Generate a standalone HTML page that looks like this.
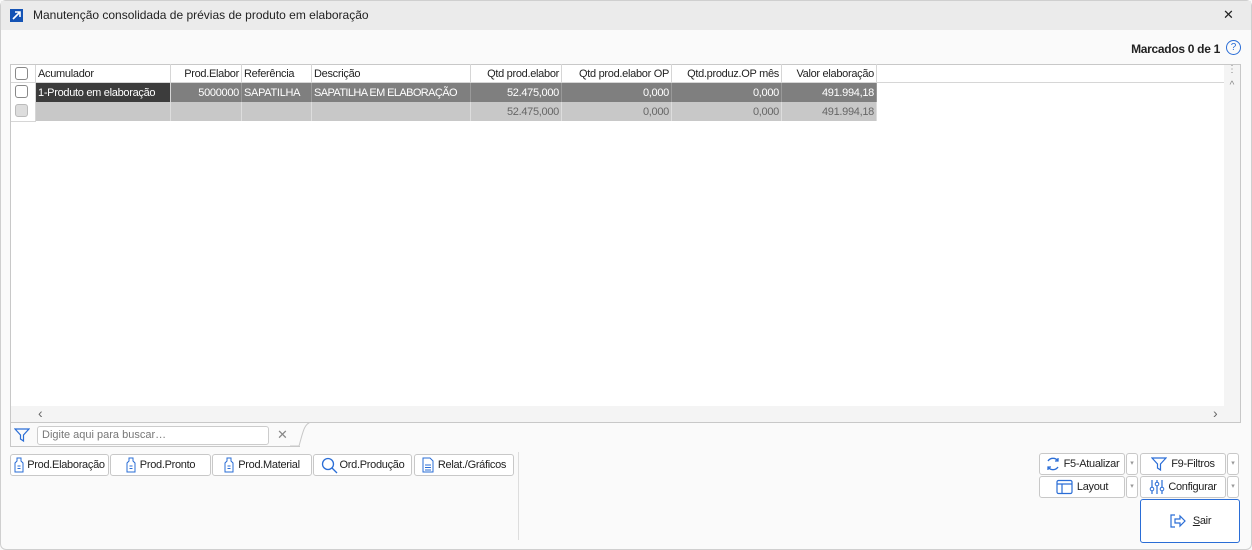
<!DOCTYPE html>
<html><head><meta charset="utf-8"><style>
*{box-sizing:border-box;margin:0;padding:0}
body{width:1252px;height:550px;background:#fafafa;font-family:"Liberation Sans",sans-serif;font-size:11px;color:#222;position:relative;overflow:hidden}
.a{position:absolute}
.win{left:0;top:0;width:1252px;height:550px;border:1px solid #cfcfcf;border-radius:6px}
.title{left:1px;top:1px;width:1250px;height:29px;background:#ebebeb}
.grid{left:10px;top:64px;width:1231px;height:359px;border:1px solid #c8c8c8;background:#fff}
.c{position:absolute;height:19px;line-height:20px;padding:0 2px;white-space:nowrap;overflow:hidden;border-right:1px solid #d6d6d6;letter-spacing:-0.3px}
.r{text-align:right}
.cb{position:absolute;width:13px;height:13px;border:1px solid #888;border-radius:3px;background:#fff}
.btn{position:absolute;height:22px;border:1px solid #c8c8c8;border-radius:3px;background:#fff;display:flex;align-items:center;justify-content:center;gap:4px;font-size:11px;white-space:nowrap;letter-spacing:-0.3px}
.dd{position:absolute;width:12px;height:22px;border:1px solid #c8c8c8;border-radius:3px;background:#fff;color:#999;font-size:7px;text-align:center;line-height:20px}
</style></head><body>
<div class="a win"></div>
<div class="a title"></div>
<div class="a" style="left:10px;top:9px;width:13px;height:13px;background:#1453b5"><svg width="13" height="13"><path d="M3 10L10 3M5 3h5v5" stroke="#fff" stroke-width="1.6" fill="none"/></svg></div>
<div class="a" style="left:33px;top:8px;font-size:12px">Manutenção consolidada de prévias de produto em elaboração</div>
<div class="a" style="left:1223px;top:7px;font-size:13px">✕</div>
<div class="a" style="right:32px;top:42px;font-weight:bold;font-size:12px;letter-spacing:-0.3px">Marcados 0 de 1</div>
<div class="a" style="left:1226px;top:40px;width:15px;height:15px;border:1.3px solid #2a6dd6;border-radius:50%;color:#2a6dd6;font-size:10px;text-align:center;line-height:13px">?</div>

<div class="a grid">
 <div class="a" style="left:0;top:0;width:1213px;height:18px;border-bottom:1px solid #d6d6d6"></div>
 <div class="cb" style="left:4px;top:2px"></div>
 <div class="c" style="left:0;top:0;width:25px"></div>
 <div class="c" style="left:25px;top:-1px;width:135px">Acumulador</div>
 <div class="c r" style="left:160px;top:-1px;width:71px">Prod.Elabor</div>
 <div class="c" style="left:231px;top:-1px;width:70px">Referência</div>
 <div class="c" style="left:301px;top:-1px;width:159px">Descrição</div>
 <div class="c r" style="left:460px;top:-1px;width:91px">Qtd prod.elabor</div>
 <div class="c r" style="left:551px;top:-1px;width:110px">Qtd prod.elabor OP</div>
 <div class="c r" style="left:661px;top:-1px;width:110px">Qtd.produz.OP mês</div>
 <div class="c r" style="left:771px;top:-1px;width:95px">Valor elaboração</div>
 <div class="cb" style="left:4px;top:20px"></div>
 <div class="c" style="left:25px;top:18px;width:135px;background:#3c3c3c;color:#fff">1-Produto em elaboração</div>
 <div style="position:absolute;left:160px;top:18px;width:706px;height:19px;background:#7f7f7f"></div>
 <div class="c r" style="left:160px;top:18px;width:71px;color:#fff;border-color:#999">5000000</div>
 <div class="c" style="left:231px;top:18px;width:70px;color:#fff;border-color:#999">SAPATILHA</div>
 <div class="c" style="left:301px;top:18px;width:159px;color:#fff;border-color:#999;letter-spacing:-0.6px">SAPATILHA EM ELABORAÇÃO</div>
 <div class="c r" style="left:460px;top:18px;width:91px;color:#fff;border-color:#999">52.475,000</div>
 <div class="c r" style="left:551px;top:18px;width:110px;color:#fff;border-color:#999">0,000</div>
 <div class="c r" style="left:661px;top:18px;width:110px;color:#fff;border-color:#999">0,000</div>
 <div class="c r" style="left:771px;top:18px;width:95px;color:#fff;border-color:#999">491.994,18</div>
 <div class="cb" style="left:4px;top:39px;background:#ddd;border-color:#bbb"></div>
 <div style="position:absolute;left:25px;top:37px;width:841px;height:19px;background:#c8c8c8"></div>
 <div class="c" style="left:25px;top:37px;width:135px;border-color:#ddd"></div>
 <div class="c" style="left:160px;top:37px;width:71px;border-color:#ddd"></div>
 <div class="c" style="left:231px;top:37px;width:70px;border-color:#ddd"></div>
 <div class="c" style="left:301px;top:37px;width:159px;border-color:#ddd"></div>
 <div class="c r" style="left:460px;top:37px;width:91px;color:#666;border-color:#ddd">52.475,000</div>
 <div class="c r" style="left:551px;top:37px;width:110px;color:#666;border-color:#ddd">0,000</div>
 <div class="c r" style="left:661px;top:37px;width:110px;color:#666;border-color:#ddd">0,000</div>
 <div class="c r" style="left:771px;top:37px;width:95px;color:#666;border-color:#ddd">491.994,18</div>
 <div style="position:absolute;left:0;top:56px;width:25px;height:1px;background:#d6d6d6"></div>
 <div style="position:absolute;left:24px;top:0;width:1px;height:57px;background:#d6d6d6"></div>
 <div style="position:absolute;left:1213px;top:0;width:16px;height:341px;background:#f4f4f4;color:#888;text-align:center;font-size:10px;line-height:1">⋮<br><span style="display:block;margin-top:6px">^</span></div>
 <div style="position:absolute;left:0;top:341px;width:1229px;height:16px;background:#f4f4f4;color:#666;font-size:14px;line-height:15px"><span style="margin-left:27px">‹</span><span style="position:absolute;left:1202px">›</span></div>
</div>

<div class="a" style="left:10px;top:422px;width:290px;height:25px;border:1px solid #c8c8c8;border-top:none;border-right:none"></div>
<svg class="a" style="left:290px;top:422px" width="22" height="26"><path d="M21 0C14 2 13 10 9 24H0" stroke="#c8c8c8" fill="none"/></svg>
<svg class="a" style="left:14px;top:427px" width="16" height="16"><path d="M1 2h14l-5.5 6v6l-3-2V8z" stroke="#2a6dd6" stroke-width="1.2" fill="none"/></svg>
<div class="a" style="left:37px;top:426px;width:232px;height:19px;border:1px solid #ccc;border-radius:3px;background:#fff;color:#777;padding-left:4px;line-height:17px">Digite aqui para buscar…</div>
<div class="a" style="left:277px;top:427px;color:#888;font-size:13px">✕</div>

<div class="btn" style="left:10px;top:454px;width:99px;gap:3px"><svg width="10" height="16" style="flex:none"><path d="M3 1h4v3l2 2v9H1V6l2-2z M3.5 9h3M3.5 11.5h3" stroke="#2a6dd6" fill="none"/></svg>Prod.Elaboração</div>
<div class="btn" style="left:110px;top:454px;width:101px"><svg width="10" height="16" style="flex:none"><path d="M3 1h4v3l2 2v9H1V6l2-2z M3.5 9h3M3.5 11.5h3" stroke="#2a6dd6" fill="none"/></svg>Prod.Pronto</div>
<div class="btn" style="left:212px;top:454px;width:100px"><svg width="10" height="16" style="flex:none"><path d="M3 1h4v3l2 2v9H1V6l2-2z M3.5 9h3M3.5 11.5h3" stroke="#2a6dd6" fill="none"/></svg>Prod.Material</div>
<div class="btn" style="left:313px;top:454px;width:99px;gap:2px"><svg width="17" height="17" style="flex:none"><circle cx="7" cy="7" r="5.5" stroke="#2a6dd6" stroke-width="1.3" fill="none"/><path d="M11 11l5 5" stroke="#2a6dd6" stroke-width="1.3"/></svg>Ord.Produção</div>
<div class="btn" style="left:414px;top:454px;width:100px"><svg width="12" height="16" style="flex:none"><path d="M1 1h7l3 3v11H1z M3 8h6M3 10.5h6M3 13h6" stroke="#2a6dd6" fill="none"/></svg>Relat./Gráficos</div>
<div class="a" style="left:518px;top:452px;width:1px;height:88px;background:#ddd"></div>

<div class="btn" style="left:1039px;top:453px;width:86px;gap:3px"><svg width="16" height="16" style="flex:none"><path d="M13 5A6 6 0 0 0 3 5M3 11a6 6 0 0 0 10 0M13 2v3h-3M3 14v-3h3" stroke="#2a6dd6" stroke-width="1.3" fill="none"/></svg>F5-Atualizar</div>
<div class="dd" style="left:1126px;top:453px">▾</div>
<div class="btn" style="left:1140px;top:453px;width:86px"><svg width="16" height="16" style="flex:none"><path d="M1 2h14l-5.5 6v6l-3-2V8z" stroke="#2a6dd6" stroke-width="1.2" fill="none"/></svg>F9-Filtros</div>
<div class="dd" style="left:1227px;top:453px">▾</div>
<div class="btn" style="left:1039px;top:476px;width:86px"><svg width="17" height="16" style="flex:none"><rect x="1" y="1.5" width="15" height="13" rx="1.5" stroke="#2a6dd6" stroke-width="1.2" fill="none"/><path d="M1 5h15M6 5v9.5" stroke="#2a6dd6" stroke-width="1.2"/></svg>Layout</div>
<div class="dd" style="left:1126px;top:476px">▾</div>
<div class="btn" style="left:1140px;top:476px;width:86px;gap:3px"><svg width="16" height="16" style="flex:none"><path d="M3 1v14M8 1v14M13 1v14" stroke="#2a6dd6" stroke-width="1.2"/><circle cx="3" cy="10" r="1.8" fill="#fff" stroke="#2a6dd6"/><circle cx="8" cy="5" r="1.8" fill="#fff" stroke="#2a6dd6"/><circle cx="13" cy="10" r="1.8" fill="#fff" stroke="#2a6dd6"/></svg>Configurar</div>
<div class="dd" style="left:1227px;top:476px">▾</div>
<div class="btn" style="left:1140px;top:499px;width:100px;height:44px;border-color:#2a6dd6;gap:6px"><svg width="18" height="16" style="flex:none"><path d="M6 2H2v12h4" stroke="#2a6dd6" stroke-width="1.2" fill="none"/><path d="M6 6h5V3l5 5-5 5v-3H6z" stroke="#2a6dd6" stroke-width="1.2" fill="none"/></svg><span><u>S</u>air</span></div>
</body></html>
